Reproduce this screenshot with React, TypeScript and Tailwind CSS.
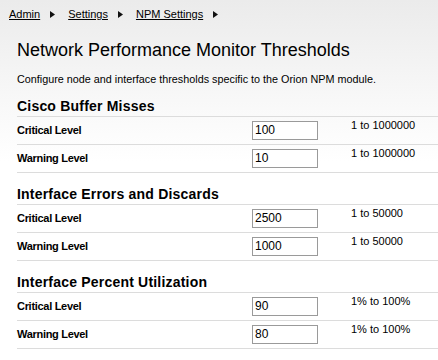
import React from 'react';

const sections = [
  {
    title: 'Cisco Buffer Misses',
    rows: [
      { label: 'Critical Level', value: '100', range: '1 to 1000000' },
      { label: 'Warning Level', value: '10', range: '1 to 1000000' },
    ],
  },
  {
    title: 'Interface Errors and Discards',
    rows: [
      { label: 'Critical Level', value: '2500', range: '1 to 50000' },
      { label: 'Warning Level', value: '1000', range: '1 to 50000' },
    ],
  },
  {
    title: 'Interface Percent Utilization',
    rows: [
      { label: 'Critical Level', value: '90', range: '1% to 100%' },
      { label: 'Warning Level', value: '80', range: '1% to 100%' },
    ],
  },
];

function Arrow() {
  return (
    <svg width="5" height="7" viewBox="0 0 5 7" className="ml-[10px] mr-[13px]">
      <path d="M0 0 L5 3.5 L0 7 Z" fill="#111" />
    </svg>
  );
}

export default function App() {
  const crumbs = ['Admin', 'Settings', 'NPM Settings'];
  return (
    <div
      className="w-[438px] h-[360px] overflow-hidden bg-gradient-to-b from-[#ebebeb] via-[#f9f9f9] via-30% to-white to-45% text-black"
      style={{ fontFamily: '"Liberation Sans", Arial, sans-serif' }}
    >
      <div className="flex items-center pl-[9px] pt-[8px] text-[11px] leading-[13px]">
        {crumbs.map((c) => (
          <React.Fragment key={c}>
            <a className="underline text-black">{c}</a>
            <Arrow />
          </React.Fragment>
        ))}
      </div>

      <div className="pl-[17px]">
        <h1 className="mt-[18px] text-[18px] leading-[22px] font-normal">
          Network Performance Monitor Thresholds
        </h1>
        <p className="mt-[12px] text-[10.8px] leading-[13px]">
          Configure node and interface thresholds specific to the Orion NPM module.
        </p>

        {sections.map((s, i) => (
          <div key={s.title} className={i === 0 ? 'mt-[12px]' : 'mt-[13px]'}>
            <h2 className="text-[14px] leading-[17px] font-bold tracking-[0.2px] border-b border-[#dcdcdc] pb-[1px]">
              {s.title}
            </h2>
            {s.rows.map((r) => (
              <div key={r.label} className="flex h-[28px] border-b border-[#dcdcdc]">
                <div className="w-[235px] self-center text-[11px] font-bold tracking-[-0.3px]">{r.label}</div>
                <div className="self-center w-[66px] h-[19px] border border-[#9a9a9a] bg-white px-[2px] text-[12px] leading-[17px]">
                  {r.value}
                </div>
                <div className="ml-[33px] pt-[2px] text-[11px] leading-[13px]">{r.range}</div>
              </div>
            ))}
          </div>
        ))}
      </div>
    </div>
  );
}
